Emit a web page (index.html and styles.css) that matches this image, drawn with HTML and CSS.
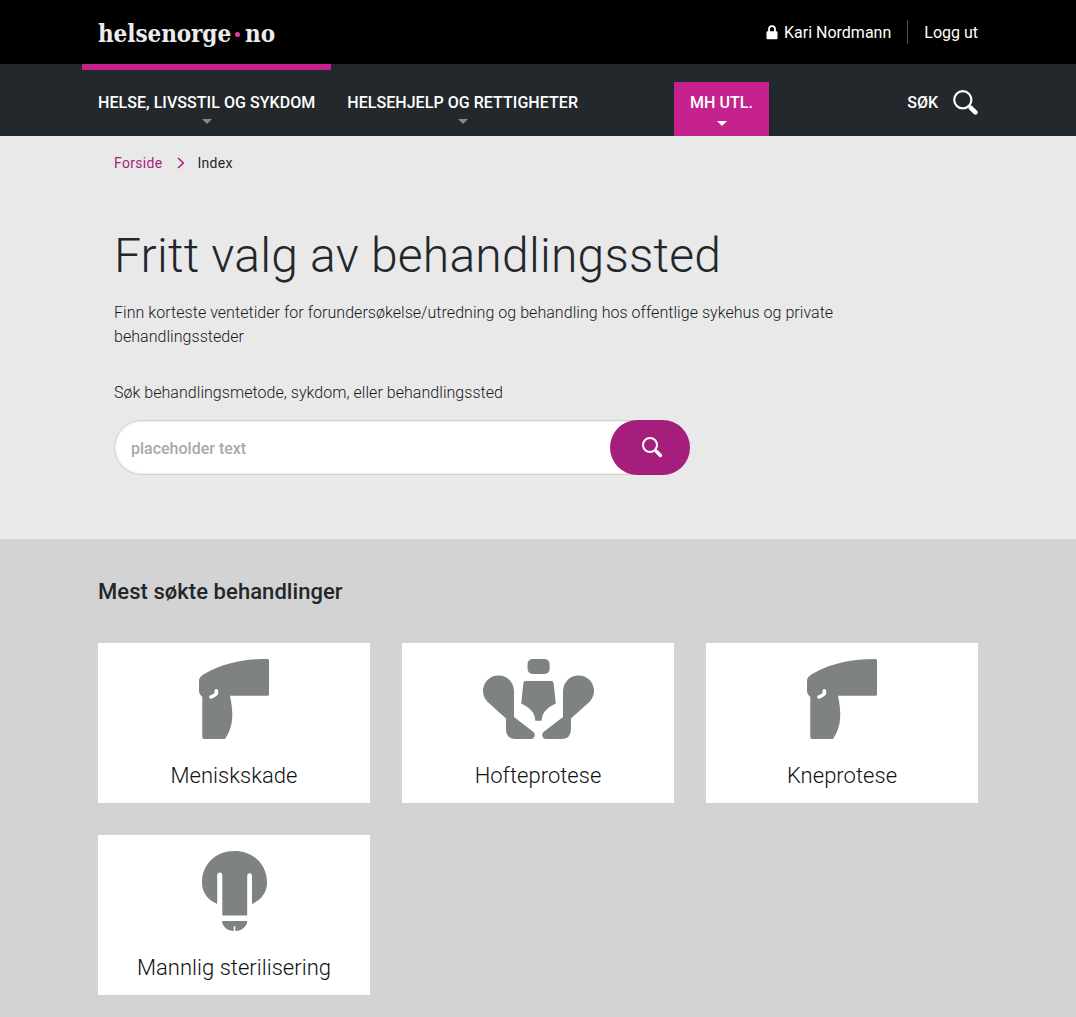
FILE: index.html
```html
<!DOCTYPE html>
<html lang="no">
<head>
<meta charset="utf-8">
<title>Fritt valg av behandlingssted</title>
<link rel="stylesheet" href="styles.css">
</head>
<body>
<header class="topbar">
  <div class="container topbar-inner">
    <a class="logo"><span class="logo-name">helsenorge</span><i class="logo-dot"></i><span class="logo-tld">no</span></a>
    <div class="user">
      <svg class="lock" width="12" height="15" viewBox="0 0 12 15"><path d="M3 7V4.2a3 3 0 0 1 6 0V7" fill="none" stroke="#fff" stroke-width="1.8"/><rect x="0.5" y="6.3" width="11" height="8" rx="1" fill="#fff"/></svg>
      <span class="user-name">Kari Nordmann</span>
      <span class="logout">Logg ut</span>
    </div>
  </div>
</header>
<nav class="nav">
  <div class="container nav-inner">
    <a class="nav-item nav-current"><span>HELSE, LIVSSTIL OG SYKDOM</span><i class="caret"></i></a>
    <a class="nav-item"><span>HELSEHJELP OG RETTIGHETER</span><i class="caret"></i></a>
    <a class="nav-item nav-active"><span>MH UTL.</span><i class="caret"></i></a>
    <a class="nav-search"><span>SØK</span>
      <svg width="25" height="25" viewBox="0 0 25 25" fill="none" stroke="#fff"><circle cx="9.8" cy="9.8" r="8.6" stroke-width="2.2"/><path d="M15.8 15.8l2 2" stroke-width="2.2"/><path d="M17.8 17.800l4.600 4.600" stroke-width="4.600" stroke-linecap="round"/></svg>
    </a>
  </div>
</nav>
<main>
  <section class="hero">
    <div class="crumbs"><a>Forside</a><svg width="8" height="12" viewBox="0 0 8 12"><path d="M1 1l5.400 5L1 11" fill="none" stroke="#a51e7b" stroke-width="1.500"/></svg><span>Index</span></div>
    <h1>Fritt valg av behandlingssted</h1>
    <p class="intro">Finn korteste ventetider for forundersøkelse/utredning og behandling hos offentlige sykehus og private behandlingssteder</p>
    <label class="label" for="q">Søk behandlingsmetode, sykdom, eller behandlingssted</label>
    <div class="search">
      <input id="q" type="text" placeholder="placeholder text">
      <button aria-label="Søk"><svg width="21" height="21" viewBox="0 0 21 21" fill="none" stroke="#fff"><circle cx="8" cy="8" r="7" stroke-width="2"/><path d="M12.800 12.800l2 2" stroke-width="2"/><path d="M14.600 14.600l3.800 3.800" stroke-width="3.600" stroke-linecap="round"/></svg></button>
    </div>
  </section>
  <section class="popular">
    <h2>Mest søkte behandlinger</h2>
    <div class="cards">
      <a class="card">
        <svg width="70" height="80" viewBox="0 0 70 80"><path d="M7 14C25 4 45 0 68.500 0Q70 0 70 1.500V35.200Q70 36.700 68.500 36.700H31C34 52 35.500 66 26 80H5Q3.300 80 3.300 78.300V38Q0 35.500 0 32.500V22Q0 17 7 14Z"/><path d="M17.300 31.800V34.800Q15 37 12 38" fill="none" stroke="#fff" stroke-width="3.600" stroke-linecap="round"/></svg>
        <span>Meniskskade</span>
      </a>
      <a class="card">
        <svg width="111" height="80" viewBox="0 0 111 80"><rect x="44.600" width="22" height="15" rx="5"/><path d="M42.500 22H68.500Q70.300 22 70.600 24L72.800 44.500C65 48 59 53 58.700 61.700H52.300C52 53 46 48 38.200 44.500L40.400 24Q40.700 22 42.500 22Z"/><path id="hip-half" d="M31 32V58L50.500 73Q52.500 75 51.500 77.500Q50.500 80 48 80H33Q23 80 23 70V59.500L4.700 43A15.500 15.500 0 1 1 31 32Z"/><use href="#hip-half" transform="matrix(-1 0 0 1 111 0)"/></svg>
        <span>Hofteprotese</span>
      </a>
      <a class="card">
        <svg width="70" height="80" viewBox="0 0 70 80"><path d="M7 14C25 4 45 0 68.500 0Q70 0 70 1.500V35.200Q70 36.700 68.500 36.700H31C34 52 35.500 66 26 80H5Q3.300 80 3.300 78.300V38Q0 35.500 0 32.500V22Q0 17 7 14Z"/><path d="M17.300 31.800V34.800Q15 37 12 38" fill="none" stroke="#fff" stroke-width="3.600" stroke-linecap="round"/></svg>
        <span>Kneprotese</span>
      </a>
      <a class="card">
        <svg width="65" height="80" viewBox="0 0 65 80"><path d="M15.200 53V24A2.500 2.500 0 0 1 20.300 24V64.400H45.200V24A2.500 2.500 0 0 1 50 24V53C59 49 65 42 65 31.500C65 13 51 0 32.500 0S0 13 0 31.500C0 42 6 49 15.200 53Z"/><path d="M20 70H45.300C45 76 39 80 33.300 80V76Q33.300 75 32.500 75T31.700 76V80C26 80 20.300 76 20 70Z"/></svg>
        <span>Mannlig sterilisering</span>
      </a>
    </div>
  </section>
</main>
</body>
</html>
```
FILE: styles.css
```css
* { box-sizing: border-box; }
body { margin: 0; font-family: Roboto, "Liberation Sans", sans-serif; font-size: 16px; color: #22272b; background: #d3d3d3; }
.container { width: 880px; margin: 0 auto; display: flex; }
.topbar { height: 64px; background: #000; color: #fff; }
.topbar-inner { height: 64px; justify-content: space-between; align-items: center; }
.logo { display: flex; align-items: center; font: bold 24px/32px "DejaVu Serif Condensed", "DejaVu Serif", serif; color: #ececee; padding-top: 4px; }
.logo-name { width: 133px; letter-spacing: -0.08px; white-space: nowrap; }
.logo-tld { width: 32px; }
.logo-dot { width: 5px; height: 5px; margin: 0 5px 0 4px; border-radius: 50%; background: #dd3fa0; }
.user { display: flex; align-items: center; line-height: 24px; }
.lock { margin-right: 6px; }
.user-name { height: 24px; padding-right: 16px; border-right: 1px solid #4b5053; margin-right: 16px; }
.user-name, .logout { padding-top: 1px; }
.logout { height: 24px; }
.nav { height: 72px; background: #23282c; color: #fff; }
.nav-inner { height: 72px; align-items: flex-end; }
.nav-item { height: 54px; display: flex; flex-direction: column; align-items: center; padding: 9px 16px 0; font-weight: 500; line-height: 24px; letter-spacing: .05px; white-space: nowrap; }
.nav-current { height: 72px; margin-left: -16px; border-top: 6px solid #c5228e; padding-top: 21px; }
.nav-active { width: 95px; background: #c5228e; margin-left: 80px; }
.caret { border: 5px solid transparent; border-top-color: #85898b; border-bottom: 0; margin-top: 4px; }
.nav-active .caret { border-top-color: #fff; margin-top: 6px; }
.nav-search { margin-left: auto; height: 54px; padding-top: 8px; display: flex; gap: 15px; align-items: flex-start; font-weight: 500; line-height: 24px; }
.nav-search span { padding-top: 1px; }
.hero { height: 403px; background: #e9e9e9; padding: 16px 98px 0 114px; }
.crumbs { height: 22px; display: flex; align-items: center; font-size: 14px; letter-spacing: .3px; }
.crumbs a { color: #a51e7b; }
.crumbs svg { margin: 0 12px 0 15px; }
h1 { margin: 50px 0 0; font-weight: 300; font-size: 48px; line-height: 64px; letter-spacing: .23px; }
.intro { width: 750px; margin: 13px 0 0; font-weight: 300; line-height: 24px; letter-spacing: .045px; color: #16191c; }
.label { display: block; margin-top: 32px; font-weight: 300; line-height: 24px; letter-spacing: .04px; color: #16191c; }
.search { width: 576px; height: 55px; margin-top: 15px; display: flex; border: 1px solid #d0d0d0; border-radius: 28px; background: #fff; box-shadow: inset 0 0 3px #ddd; }
.search input { flex: 1; min-width: 0; padding: 2px 16px 0; border: 0; background: none; font: 500 16px Roboto, sans-serif; }
.search input::placeholder { color: #a9a9a9; opacity: 1; }
.search button { width: 80px; height: 55px; margin: -1px; padding: 3px 0 0 4px; border: 0; border-radius: 28px; background: #a51e7b; }
.popular { padding: 37px 98px 22px; }
h2 { margin: 0; font-weight: 500; font-size: 22px; line-height: 32px; letter-spacing: .06px; }
.cards { margin-top: 35px; display: grid; grid-template-columns: repeat(3, 272px); gap: 32px; }
.card { height: 160px; padding-top: 16px; background: #fff; display: flex; flex-direction: column; align-items: center; font-size: 22px; font-weight: 300; line-height: 32px; letter-spacing: .03px; color: #111; }
.card svg { fill: #7e8281; margin-bottom: 21px; }
```
